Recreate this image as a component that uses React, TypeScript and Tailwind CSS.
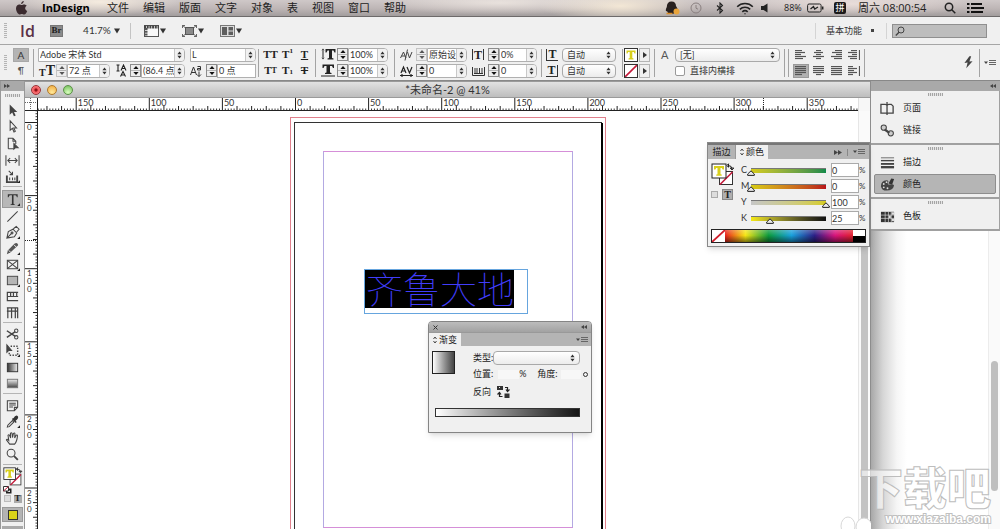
import React from "react";

const step = 73.1;

/* ---------- shared parts ---------- */

function UpDown({ className = "" }: { className?: string }) {
  return (
    <svg viewBox="0 0 5 8" className={"h-2 w-[5px] " + className} fill="#333">
      <path d="M2.5 0.6 4.6 3.2H0.4zM2.5 7.4 4.6 4.8H0.4z" />
    </svg>
  );
}

function Rule() {
  return <span className="h-7 w-px shrink-0 self-center bg-[#a3a3a3]" />;
}

function Grip() {
  return <span className="h-[3px] w-[15px] bg-[repeating-linear-gradient(90deg,#a5a5a5_0_1px,#e4e4e4_1px_2px)]" />;
}

function SideGrip() {
  return <span className="block h-4 w-[3px] shrink-0 bg-[repeating-linear-gradient(180deg,#b5b5b5_0_1px,#eeeeee_1px_2px)]" />;
}

function Stepper({ name, dim = false }: { name: string; dim?: boolean }) {
  return (
    <span className={"flex h-[13px] w-[11px] shrink-0 flex-col border bg-[#ededed] " + (dim ? "border-[#c4c4c4]" : "border-[#8c8c8c]")}>
      <button aria-label={name + " +"} className="flex flex-1 items-center justify-center border-b border-[#b5b5b5]">
        <svg viewBox="0 0 6 3" className="h-[3px] w-[6px]"><path d="M3 0 5.6 3H.4z" fill={dim ? "#555" : "#111"} /></svg>
      </button>
      <button aria-label={name + " -"} className="flex flex-1 items-center justify-center">
        <svg viewBox="0 0 6 3" className="h-[3px] w-[6px]"><path d="M3 3 5.6 0H.4z" fill={dim ? "#555" : "#111"} /></svg>
      </button>
    </span>
  );
}

function Combo({ name, value, className = "" }: { name: string; value: string; className?: string }) {
  return (
    <span className={"flex h-[14px] min-w-0 overflow-hidden rounded-r border border-[#b0b0b0] bg-white " + className}>
      <input aria-label={name} defaultValue={value} className="min-w-0 flex-1 bg-white pl-px text-[9px] leading-3 text-[#333] outline-none" />
      <button aria-label={name + " ▾"} className="flex w-[10px] shrink-0 items-center justify-center border-l border-[#c8c8c8] bg-[#f1f1f1]">
        <UpDown />
      </button>
    </span>
  );
}

function Pop({ name, value, className = "" }: { name: string; value: string; className?: string }) {
  return (
    <span className={"relative flex h-[14px] items-center rounded border border-[#a9a9a9] bg-linear-to-b from-white to-[#ececec] " + className}>
      <select aria-label={name} defaultValue={value} className="h-full w-full appearance-none bg-transparent pl-1 text-[9px] leading-3 text-[#333] outline-none">
        <option>{value}</option>
      </select>
      <UpDown className="pointer-events-none absolute right-1" />
    </span>
  );
}

function FillStroke({ className = "size-6" }: { className?: string }) {
  return (
    <svg viewBox="0 0 24 24" className={"shrink-0 " + className}>
      <rect x="8.5" y="8.5" width="13" height="13" fill="#fff" stroke="#333" />
      <path d="M9 21.5 21.5 9" stroke="#c3193a" strokeWidth="1.6" />
      <rect x="1" y="1" width="14" height="14" fill="#fff" stroke="#222" />
      <path d="M3 3h10v3.600h-1.400L10.800 5H9.500v6.200l1.200.4v1.200h-5.400v-1.200l1.200-.4V5H5.200l-.8 1.600H3z" fill="#d8cf1c" />
      <path d="M17 2.500q4 0 4 3.500M17.500.800v3.400L15.800 2.500zM19.200 5h3.600L21 7z" fill="none" stroke="#222" strokeWidth="1" />
    </svg>
  );
}

/* ---------- menu bar ---------- */

const menus = ["文件", "编辑", "版面", "文字", "对象", "表", "视图", "窗口", "帮助"];

function MenuBar() {
  return (
    <header className="flex h-[17px] shrink-0 items-center border-b border-[#6d6a6a] bg-[radial-gradient(ellipse_80px_14px_at_100px_2px,#fff5e6cc,transparent),radial-gradient(ellipse_120px_12px_at_500px_3px,#fdf6ee99,transparent),radial-gradient(ellipse_80px_16px_at_620px_6px,#fff2dccc,transparent),radial-gradient(ellipse_120px_14px_at_850px_4px,#fff0ea99,transparent),linear-gradient(180deg,#cfc8c8,#bdb5b5_55%,#a29d9d)] text-[11px] leading-4 text-[#222]">
      <svg viewBox="0 0 12 14" className="ml-[15px] h-[14px] w-[13px] shrink-0 fill-[#3b2b2f]">
        <path d="M8.3 0C8.4 1.5 7 3.1 5.6 3.1 5.5 1.7 6.9.2 8.3 0zM6.2 4c.7 0 1.3-.6 2.5-.6 1 0 2 .6 2.5 1.4-2.2 1.3-1.9 4.2.5 5.1-.6 1.7-1.8 3.6-3.1 3.6-.9 0-1.200-.6-2.300-.6s-1.500.6-2.300.6C2.500 13.500.500 10.400.500 7.600c0-2.700 1.700-4.100 3.300-4.100 1.100 0 1.800.5 2.400.5z" />
      </svg>
      <nav className="ml-[14px] flex gap-[14px] whitespace-nowrap">
        <button className="w-[51px] text-left font-['Open_Sans',sans-serif] font-bold text-black">InDesign</button>
        {menus.map((m) => (
          <button key={m}>{m}</button>
        ))}
      </nav>
      <div className="ml-auto flex shrink-0 items-center pr-4">
        <svg viewBox="0 0 16 14" className="h-[14px] w-4">
          <path d="M6.500.500C9.500.500 11 2.500 11 5c2 3 2.200 5 1.500 5.500L11 10c-.5 2-2 3-4.500 3S2.500 12 2 10c-1 1-2-.5-.2-4C1.800 2.500 3.500.500 6.500.500z" fill="#28211f" />
          <circle cx="11.500" cy="10.500" r="3" fill="#e9a43a" />
          <path d="M1.500 12.500h6" stroke="#d98b24" strokeWidth="1.500" />
        </svg>
        <svg viewBox="0 0 12 12" className="ml-[9px] size-3" fill="none" stroke="#8a8080">
          <circle cx="6" cy="6" r="5" /><path d="M6 3v3.200l2 1" />
        </svg>
        <svg viewBox="0 0 8 12" className="ml-[14px] h-3 w-2" fill="none" stroke="#222" strokeWidth="1.100"><path d="M1 3.500 6.500 8.500 4 11V1l2.500 2.500L1 8.500" /></svg>
        <svg viewBox="0 0 18 13" className="ml-[12px] h-[13px] w-[18px]" fill="none" stroke="#222" strokeWidth="1.600">
          <path d="M1.200 4.800a11 11 0 0 1 15.600 0M3.800 7.400a7.400 7.400 0 0 1 10.400 0M6.300 9.900a4 4 0 0 1 5.400 0" /><circle cx="9" cy="11.800" r=".7" fill="#222" stroke="none" />
        </svg>
        <svg viewBox="0 0 7 10" className="ml-[7px] h-[10px] w-[7px]"><path d="M0 3h2.500L6.500.500v9L2.500 7H0z" fill="#222" /></svg>
        <span className="ml-4 w-[20px] font-['Open_Sans',sans-serif] text-[9px]">88%</span>
        <svg viewBox="0 0 17 10" className="ml-[3px] h-[10px] w-[17px]" fill="none" stroke="#222">
          <rect x=".600" y="1" width="13.500" height="8" rx="1.500" /><path d="M15.700 3.500v3" strokeWidth="1.500" /><path d="m3.500 6 3-2.500 1.200 2.500L11 4" strokeWidth="1.300" />
        </svg>
        <span className="ml-[10px] flex size-3 items-center justify-center rounded-xs bg-[#1c1a1a] text-[9px] leading-3 text-white">拼</span>
        <span className="ml-[12px] w-[74px] whitespace-nowrap font-['Open_Sans','Noto_Sans_CJK_SC',sans-serif] text-[11px]">周六 08:00:54</span>
        <svg viewBox="0 0 12 12" className="ml-[12px] size-3" fill="none" stroke="#222" strokeWidth="1.500"><circle cx="5" cy="5" r="3.700" /><path d="m7.800 7.800 3.500 3.500" /></svg>
        <svg viewBox="0 0 17 12" className="ml-[11px] h-3 w-[17px]" stroke="#111" strokeWidth="2"><path d="M0 2h2.500M4 2h11M0 6h2.500M4 6h13M0 10h2.500M4 10h12" /></svg>
      </div>
    </header>
  );
}

/* ---------- application bar ---------- */

function Caret() {
  return <svg viewBox="0 0 6 6" className="size-[6px]"><path d="M0 .500h6L3 5.500z" fill="#333" /></svg>;
}

function AppBar() {
  return (
    <div className="flex h-7 shrink-0 items-center border-b border-[#a6a6a6] bg-[#f0f0f0]">
      <span className="ml-1"><SideGrip /></span>
      <span className="ml-[13px] w-[15px] font-['Open_Sans',sans-serif] text-[16px] leading-5 font-semibold text-[#5b3147]">Id</span>
      <button className="ml-[15px] flex h-3 w-[13px] items-center justify-center border border-[#777] bg-[#8b8b8b] font-['Liberation_Serif',serif] text-[9px] leading-none font-bold text-[#222]">Br</button>
      <button className="ml-5 flex items-center gap-[3px] text-[10px] text-[#333]">
        <span className="w-[28px]">41.7%</span><Caret />
      </button>
      <span className="ml-[10px] h-4 w-px bg-[#c4c4c4]" />
      <button aria-label="视图选项" className="ml-[13px] flex items-center gap-px">
        <svg viewBox="0 0 15 12" className="h-3 w-[15px]"><rect x=".500" y=".500" width="14" height="11" fill="#f8f8f8" stroke="#555" /><path d="M0 2h15" stroke="#444" strokeWidth="3" strokeDasharray="2 .700" /><path d="M2 3v9" stroke="#555" strokeWidth="3" strokeDasharray="2 .700" /></svg>
        <Caret />
      </button>
      <button aria-label="屏幕模式" className="ml-4 flex items-center gap-px">
        <svg viewBox="0 0 15 12" className="h-3 w-[15px]"><rect x="3.500" y="2.500" width="8" height="7" fill="#8a8a8a" stroke="#555" /><path d="M.500 3V.500H3M12 .500h2.500V3M.500 9v2.500H3M12 11.500h2.500V9M0 0l3 2.500M15 0l-3 2.500M0 12l3-2.500M15 12l-3-2.500" fill="none" stroke="#666" /></svg>
        <Caret />
      </button>
      <button aria-label="排列文档" className="ml-4 flex items-center gap-px">
        <svg viewBox="0 0 15 12" className="h-3 w-[15px]"><rect x=".500" y=".500" width="14" height="11" fill="#ddd" stroke="#777" /><path d="M2 2h5v8H2zM8.500 2H13v3.500H8.500zM8.500 6.500H13V10H8.500z" fill="#5e5e5e" /></svg>
        <Caret />
      </button>
      <span className="ml-auto h-4 w-px bg-[#d4d4d4]" />
      <button className="ml-[10px] flex items-center gap-[9px] text-[9px] text-[#333]">基本功能<span className="size-[3px] bg-[#444]" /></button>
      <span className="ml-3 h-4 w-px bg-[#d4d4d4]" />
      <label className="mr-[13px] ml-[5px] flex h-[14px] w-[95px] items-center border border-[#8f8f8f] bg-[#bdbdbd] pl-[2px]">
        <svg viewBox="0 0 10 10" className="size-[10px] shrink-0" fill="none" stroke="#444"><circle cx="6" cy="4" r="3" /><path d="M4 6.200.800 9.500" strokeWidth="1.300" /></svg>
        <input aria-label="搜索" className="min-w-0 flex-1 bg-transparent text-[9px] outline-none" />
      </label>
    </div>
  );
}

/* ---------- control bar ---------- */

const glyph = "flex shrink-0 items-center justify-center font-['Liberation_Serif',serif] font-bold leading-none text-[#222]";

function Bars({ rows, edge = false }: { rows: [number, number][]; edge?: boolean }) {
  return (
    <svg viewBox="0 0 12 10" className="h-[10px] w-3" stroke="#555" strokeWidth="1.200">
      {rows.map(([a, b], i) => <path key={i} d={`M${a} ${0.5 + i * 2}H${b}`} />)}
      {edge && <path d="M11.500 0v10" />}
    </svg>
  );
}

const aligns: { name: string; rows: [number, number][]; edge?: boolean }[] = [
  { name: "左对齐", rows: [[0, 7], [0, 10], [0, 6], [0, 11], [0, 8]] },
  { name: "居中", rows: [[3, 8], [1, 10], [3, 8], [0, 11], [3, 8]] },
  { name: "右对齐", rows: [[4, 11], [1, 11], [5, 11], [0, 11], [3, 11]] },
  { name: "朝向书脊", rows: [[3, 9], [0, 9], [4, 9], [0, 9], [2, 9]], edge: true },
  { name: "双齐末行齐左", rows: [[0, 11], [0, 11], [0, 11], [0, 11], [0, 7]] },
  { name: "双齐末行居中", rows: [[0, 11], [0, 11], [0, 11], [0, 11], [3, 8]] },
  { name: "全部强制双齐", rows: [[0, 11], [0, 11], [0, 11], [0, 11], [0, 11]] },
  { name: "背向书脊", rows: [[0, 5], [0, 9], [0, 6], [0, 9], [0, 5]], edge: true },
];

const caseButtons: { name: string; face: React.ReactNode }[] = [
  { name: "全部大写字母", face: "TT" },
  { name: "上标", face: <>T<sup className="text-[7px] leading-none">1</sup></> },
  { name: "下划线", face: <u>T</u> },
  { name: "小型大写字母", face: <>T<span className="text-[8px]">T</span></> },
  { name: "下标", face: <>T<sub className="text-[7px] leading-none">1</sub></> },
  { name: "删除线", face: <s>T</s> },
];

function ControlBar() {
  return (
    <div className="flex h-[35px] shrink-0 items-center overflow-hidden bg-[#f0f0f0]">
      <span className="ml-1"><SideGrip /></span>
      <div className="ml-[6px] flex w-4 shrink-0 flex-col gap-[2px]">
        <button className="h-[14px] border border-[#a8a8a8] bg-[#b4b4b4] text-[10px] leading-3 text-[#333]">A</button>
        <button className="h-[14px] text-[9px] leading-[14px] text-[#555]">¶</button>
      </div>
      <span className="mr-1 ml-1"><span className="block h-7 w-px bg-[#a3a3a3]" /></span>
      <div className="flex w-[218px] shrink-0 flex-col gap-[2px]">
        <div className="flex gap-[5px]">
          <Combo name="字体" value="Adobe 宋体 Std" className="w-[147px]" />
          <Combo name="字体样式" value="L" className="flex-1" />
        </div>
        <div className="flex items-center">
          <span className={glyph + " w-[18px] items-end text-[14px]"}><span className="text-[10px]">T</span>T</span>
          <Stepper name="字体大小" dim />
          <Combo name="字体大小" value="72 点" className="w-[43px]" />
          <svg viewBox="0 0 12 13" className="mr-[2px] ml-[6px] h-[13px] w-3" fill="none" stroke="#222" strokeWidth="1.100"><path d="M2 1v6M.500 1h3M.500 7h3M5 6.500 7.500 1l2.500 5.500M6 4.500h3M4.500 12.500l2.500-5 2.500 5M5.500 11h3" /></svg>
          <Stepper name="行距" />
          <Combo name="行距" value="(86.4 点" className="w-[44px]" />
          <svg viewBox="0 0 12 12" className="mr-1 ml-[5px] h-3 w-3" fill="none" stroke="#333"><path d="M.500 10 3.500 2l3 8M1.500 7.500h4M7.500 1.500h3V5h-3V3.500h3M9 6.500v5M7 9.500l2 2 2-2" /></svg>
          <Stepper name="基线偏移" />
          <input aria-label="基线偏移" defaultValue="0 点" className="h-[14px] w-[39px] min-w-0 border border-[#b0b0b0] bg-white pl-px text-[9px] leading-3 text-[#333]" />
        </div>
      </div>
      <span className="ml-[2px] flex"><Rule /></span>
      <div className="ml-[3px] grid w-[51px] shrink-0 grid-cols-3 gap-y-[2px]">
        {caseButtons.map((t) => (
          <button key={t.name} aria-label={t.name} className={glyph + " h-[14px] text-[11px]"}>{t.face}</button>
        ))}
      </div>
      <span className="ml-[2px] flex"><Rule /></span>
      <div className="ml-[5px] flex w-[67px] shrink-0 flex-col gap-[2px]">
        <div className="flex items-center">
          <svg viewBox="0 0 16 13" className="h-[13px] w-4 shrink-0" fill="#222"><path d="M.500 2.500 2 .500 3.500 2.500zM1.500 3h1v6h-1zM.500 9.500h3l-1.500 2zM4.500 1h10v3.500h-1L12.500 2.500H11v7.500l1.500.500v1h-6v-1L8 10V2.500H6.500L5.500 4.500h-1z" /></svg>
          <Stepper name="垂直缩放" /><Combo name="垂直缩放" value="100%" className="flex-1" />
        </div>
        <div className="flex items-center">
          <svg viewBox="0 0 16 13" className="h-[13px] w-4 shrink-0" fill="#222"><path d="M1.500.500h11.500V4h-1L11 2H9v6.500l1.500.500v1H4V9l1.500-.500V2H3.500l-1 2h-1zM0 11.500h14v1H0z" /></svg>
          <Stepper name="水平缩放" /><Combo name="水平缩放" value="100%" className="flex-1" />
        </div>
      </div>
      <span className="ml-[6px] flex"><Rule /></span>
      <div className="ml-[5px] flex w-[67px] shrink-0 flex-col gap-[2px]">
        <div className="flex items-center">
          <svg viewBox="0 0 13 12" className="mr-[3px] h-3 w-[13px] shrink-0" fill="none" stroke="#444"><path d="m.500 9 3-6 2.500 6M1.500 7H5M7.500 3l2 6 2.500-6M5 11.500 7.500.500" /></svg>
          <Stepper name="字偶间距" dim /><Combo name="字偶间距" value="原始设" className="flex-1" />
        </div>
        <div className="flex items-center">
          <svg viewBox="0 0 13 12" className="mr-[3px] h-3 w-[13px] shrink-0" fill="none" stroke="#222" strokeWidth="1.200"><path d="m1 8 2.500-6L6 8M2 6h3M7 2l2.500 6L12 2M0 10.500h13M2 9v3M11 9v3" /></svg>
          <Stepper name="字符间距" /><Combo name="字符间距" value="0" className="flex-1" />
        </div>
      </div>
      <div className="ml-[5px] flex w-[65px] shrink-0 flex-col gap-[2px]">
        <div className="flex items-center"><span className={glyph + " mr-1 h-[11px] w-3 border-x border-[#333] text-[12px]"}>T</span><Stepper name="比例间距" /><Combo name="比例间距" value="0%" className="flex-1" /></div>
        <div className="flex items-center">
          <svg viewBox="0 0 13 12" className="mr-[3px] h-3 w-[13px] shrink-0" fill="none" stroke="#333"><path d="M.500 2v8.500h12V2M3 3v5M5 3v5M7.500 3v5M10 3v5M2 8.500h9" /></svg>
          <Stepper name="网格指定格数" /><Combo name="网格指定格数" value="0" className="flex-1" />
        </div>
      </div>
      <span className="ml-[4px] flex"><Rule /></span>
      <div className="ml-[4px] flex shrink-0 flex-col gap-[2px]">
        <div className="flex items-center gap-1"><span className={glyph + " h-3 w-3 border-b border-l border-[#333] text-[12px]"}>T</span><Pop name="字符前挤压间距" value="自动" className="w-[54px]" /></div>
        <div className="flex items-center gap-1"><span className={glyph + " h-3 w-3 border-r border-b border-[#333] text-[12px]"}>T</span><Pop name="字符后挤压间距" value="自动" className="w-[54px]" /></div>
      </div>
      <span className="ml-[6px] flex"><Rule /></span>
      <div className="ml-px flex shrink-0 flex-col gap-[2px]">
        {["填色", "描边"].map((n, i) => (
          <div key={n} className="flex gap-px">
            <button aria-label={n} className="flex h-[14px] w-[14px] items-center justify-center border border-[#333] bg-white">
              {i === 0 ? (
                <svg viewBox="0 0 12 12" className="size-3"><path d="M1.500 1.500h9v3h-1L8.800 3H7.300v6l1.200.500v1h-5v-1L4.700 9V3H3.200l-.700 1.500h-1z" fill="#d8cf1c" /></svg>
              ) : (
                <svg viewBox="0 0 12 12" className="size-3"><path d="M0 12 12 0" stroke="#c3193a" strokeWidth="1.600" /></svg>
              )}
            </button>
            <button aria-label={n + " ▸"} className="flex h-[14px] w-[11px] items-center justify-center border border-[#b5b5b5] bg-[#efefef]"><svg viewBox="0 0 4 6" className="h-[6px] w-1"><path d="M0 0v6l4-3z" fill="#333" /></svg></button>
          </div>
        ))}
      </div>
      <span className="ml-1 flex"><Rule /></span>
      <div className="ml-[6px] flex shrink-0 flex-col gap-[2px]">
        <div className="flex items-center"><span className="w-[14px] text-[11px] leading-3 text-[#555]">A</span><Pop name="字符样式" value="[无]" className="w-[105px]" /></div>
        <label className="ml-[14px] flex h-[14px] items-center gap-[5px] text-[9px] text-[#333]"><input type="checkbox" className="size-[10px] appearance-none rounded-xs border border-[#999] bg-white" />直排内横排</label>
      </div>
      <span className="ml-1 flex gap-[3px]"><Rule /><Rule /></span>
      <div className="ml-1 grid w-[71px] shrink-0 grid-cols-4 gap-y-[2px]">
        {aligns.map((a, i) => (
          <button key={a.name} aria-label={a.name} className={"flex h-[14px] w-4 items-center justify-center " + (i === 4 ? "border border-[#999] bg-[#b0b0b0]" : "")}><Bars rows={a.rows} edge={a.edge} /></button>
        ))}
      </div>
      <span className="flex"><Rule /></span>
      <button aria-label="快速应用" className="ml-auto"><svg viewBox="0 0 10 14" className="h-[13px] w-[9px]"><path d="M6 0 .500 7.500 4 7l-1.500 6.500L9.500 5.500 6 6l2-6z" fill="#444" /></svg></button>
      <span className="ml-[6px] flex"><Rule /></span>
      <button aria-label="面板菜单" className="mr-1 ml-1"><PanelMenu /></button>
    </div>
  );
}

function PanelMenu() {
  return <svg viewBox="0 0 12 8" className="h-2 w-3"><path d="M0 2.500h4L2 5z" fill="#444" /><path d="M5 1.500h7M5 3.500h7M5 5.500h7" stroke="#666" /></svg>;
}

/* ---------- tool strip ---------- */

const s = { fill: "none", stroke: "#444", strokeWidth: 1.1 } as const;
const corner = <path d="M16 15v-3l-3 3z" fill="#222" stroke="none" />;

const tools: { name: string; art: React.ReactNode }[][] = [
  [
    { name: "选择", art: <path d="M5 1.500v11l2.700-2.300 1.800 4 1.900-.9-1.800-3.800h3.500z" fill="#444" /> },
    { name: "直接选择", art: <path d="M5.500 2v10l2.400-2 1.700 3.800 1.400-.7-1.700-3.600h3z" {...s} /> },
    { name: "页面", art: <g {...s}><path d="M3.500 13.500v-11h5l3 3v3M8.500 2.500v3h3M3.500 13.500h6" /><path d="M9.500 8v6l1.700-1.500H14z" fill="#444" /></g> },
    { name: "间隙", art: <g {...s}><path d="M1 2.500v11M15 2.500v11M3 8h10M5.500 5.500 3 8l2.500 2.500M10.500 5.500 13 8l-2.500 2.500" /></g> },
    { name: "内容收集器", art: <g {...s}><path d="M2 7v7h11V7" strokeWidth="2" /><path d="M5 9v3M8 9v3M10.500 9v3M4 2l4 4M8 3v3H5" />{corner}</g> },
  ],
  [
    { name: "文字", art: <g><path d="M3 2.500h10.500v3h-.800Q12.300 3.500 11 3.500H9.100v8.700q0 .900 1.500 1v.600H5.900v-.600q1.500-.100 1.500-1V3.500H5.500Q4.200 3.500 3.800 5.500H3z" fill="#333" />{corner}</g> },
    { name: "直线", art: <path d="M2.500 13.500 13.500 2.500" {...s} /> },
    { name: "钢笔", art: <g {...s}><path d="m2 14 1.500-7 5-2.500 4 4L10 12.500zM2 14l5-5M9 4l3-2.500 3 3-2.500 3" /><circle cx="7.500" cy="8.500" r="1" />{corner}</g> },
    { name: "铅笔", art: <g><path d="m2 14 1-4 7-7q3-2 4 1 0 .500-.500 1L6 12z" fill="#555" /><path d="m4 10 2 2M9.500 4l2.500 2.500" stroke="#eee" />{corner}</g> },
    { name: "矩形框架", art: <g {...s}><rect x="2.500" y="3.500" width="11" height="9" /><path d="m2.500 3.500 11 9M13.500 3.500l-11 9" />{corner}</g> },
    { name: "矩形", art: <g><rect x="2.500" y="3.500" width="11" height="9" fill="#b5b5b5" stroke="#444" />{corner}</g> },
    { name: "水平网格", art: <g {...s}><path d="M2 3.500h12M2 8h12M2 12.500h12M2.500 3v10M6 3v5M9 3v5M12.500 3v5" strokeWidth="1.300" /></g> },
    { name: "垂直网格", art: <g {...s}><path d="M2 3h12M3 3v11M7 3v11M11 3v11M13.500 3v11M2 6.500h12" strokeWidth="1.300" /></g> },
  ],
  [
    { name: "剪刀", art: <g {...s}><path d="M2 4l9 6M2 11l9-6" strokeWidth="1.600" /><circle cx="12" cy="4" r="1.800" /><circle cx="12" cy="11" r="1.800" /></g> },
    { name: "自由变换", art: <g {...s}><path d="M2 2v8l2-2h3z" fill="#444" /><path d="M6 3.500h7.500v9.500H4.500V10" strokeWidth="1.500" strokeDasharray="1.500 1.500" />{corner}</g> },
    { name: "渐变色板", art: <g><rect x="2.500" y="3.500" width="11" height="9" fill="url(#toolgrad)" stroke="#333" /></g> },
    { name: "渐变羽化", art: <g><rect x="2.500" y="3.500" width="11" height="9" fill="url(#toolfade)" stroke="#777" /></g> },
  ],
  [
    { name: "附注", art: <g {...s}><path d="M2.500 3h11v7l-3.500 3.500H2.500zM13.500 10H10v3.500M4.500 5.500h7M4.500 7.500h7M4.500 9.500h4" /></g> },
    { name: "吸管", art: <g><path d="m2.500 14 .5-2 5-5 1.500 1.500-5 5z" {...s} /><path d="m7.500 5.500 4 4 1-1-1.200-1.200q4-3 2.200-5.300Q11.200.500 9 4.500l-.700-.300z" fill="#333" />{corner}</g> },
    { name: "抓手", art: <path d="M5 14 1.500 9.500q.5-1.500 2.500.5L3.200 4.500q.9-1.300 1.700.2L6 7.500 5.800 2.500q1-1.300 1.700 0L8 7l1-4.500q1.200-1 1.600.3L10.300 7.500l1.600-3q1.300-.700 1.400.7-.5 6-3 8.800z" {...s} /> },
    { name: "缩放", art: <g {...s}><circle cx="6.500" cy="6.500" r="4.200" /><path d="m9.700 9.700 4 4" strokeWidth="2" /></g> },
  ],
];

const toolGroupHeights = ["h-[83px]", "h-[131px]", "h-[66px]", "h-[66px]"];

function ToolStrip() {
  return (
    <aside className="flex w-[25px] shrink-0 flex-col overflow-hidden border-x border-[#989898] bg-[#f0f0f0]">
      <div className="flex h-[10px] shrink-0 items-center bg-[#a9a9a9] pl-[3px]"><svg viewBox="0 0 6 4" className="h-1 w-[6px]"><path d="M0 0v4l3-2zM3 0v4l3-2z" fill="#444" /></svg></div>
      <div className="flex h-[11px] shrink-0 items-start justify-center pt-[3px]"><Grip /></div>
      <svg className="absolute size-0" aria-hidden="true">
        <defs>
          <linearGradient id="toolgrad"><stop offset="0" stopColor="#333" /><stop offset="1" stopColor="#eee" /></linearGradient>
          <linearGradient id="toolfade" x2="0" y2="1"><stop offset="0" stopColor="#eee" /><stop offset="1" stopColor="#444" /></linearGradient>
        </defs>
      </svg>
      {tools.map((g, i) => (
        <div key={i} className="flex shrink-0 flex-col">
          <div className={"flex flex-col " + toolGroupHeights[i]}>
            {g.map((t) => (
              <button key={t.name} aria-label={t.name} className={"mx-px flex min-h-0 flex-1 items-center justify-center " + (t.name === "文字" ? "border border-[#999] bg-[#b7b7b7]" : "")}>
                <svg viewBox="0 0 16 16" className="size-[15px] shrink-0">{t.art}</svg>
              </button>
            ))}
          </div>
          <span className="mx-[2px] mt-px mb-[3px] h-px bg-[#b5b5b5]" />
        </div>
      ))}
      <button aria-label="填色和描边" className="flex h-[18px] shrink-0 items-center justify-center"><FillStroke className="size-5" /></button>
      <button aria-label="默认填色和描边" className="ml-[2px] h-2 w-[9px] shrink-0">
        <svg viewBox="0 0 9 8" className="h-2 w-[9px]"><path d="M3 2.500h5.500v5H3z" fill="#222" /><path d="M4.500 4.500H7V6H4.500z" fill="#eee" /><path d="M.500.500h5v4.500h-5z" fill="#fff" stroke="#333" /><path d="M.500 5 5.500.500" stroke="#c3193a" /></svg>
      </button>
      <div className="flex h-[9px] shrink-0 items-center justify-center gap-[3px]">
        <button aria-label="容器" className="size-[7px] border border-[#bbb] bg-[#ddd]" />
        <button aria-label="文本" className={glyph + " size-2 bg-[#aaa] text-[9px]"}>T</button>
      </div>
      <button aria-label="应用颜色" className="mx-px mt-1 flex h-[15px] shrink-0 items-center justify-center border border-[#999] bg-[#b3b3b3]"><span className="size-[10px] border border-[#333] bg-[#d9d31a]" /></button>
      <span className="mx-px mt-1 h-4 shrink-0 bg-[#aaa]" />
    </aside>
  );
}

/* ---------- document window ---------- */

function TopRuler() {
  const ticks = Array.from({ length: 330 }, (_, i) => i - 88);
  return (
    <svg className="h-[13px] min-w-0 flex-1" stroke="#222" fill="none">
      <path d="M0 12.500h821" />
      {ticks.map((n) => {
        const x = 257.5 + (n * step) / 25;
        if (x < 0 || x > 820) return null;
        return <path key={n} d={`M${x} 12V${n % 25 === 0 ? 0 : n % 5 === 0 ? 8 : 10.5}`} strokeWidth={n % 5 === 0 ? 1 : 0.9} />;
      })}
      <path d="M725.500 0v13" strokeDasharray="1 1" />
      {[-3, -2, -1, 0, 1, 2, 3, 4, 5, 6, 7].map((n) => (
        <text key={n} x={259 + n * step} y="8" stroke="none" fill="#333" fontSize="9">{Math.abs(n * 50)}</text>
      ))}
    </svg>
  );
}

function SideRuler() {
  const ticks = Array.from({ length: 400 }, (_, i) => i - 4);
  return (
    <svg className="h-full w-[13px] shrink-0" stroke="#222" fill="none">
      <path d="M12.500 0v2000" />
      {ticks.map((n) => {
        const y = 11.5 + (n * step) / 25;
        return <path key={n} d={`M12 ${y}H${n % 25 === 0 ? 0 : n % 5 === 0 ? 8 : 10.5}`} strokeWidth={n % 5 === 0 ? 1 : 0.9} />;
      })}
      <path d="M0 129.500h13" strokeDasharray="1 1" />
      {[0, 1, 2, 3, 4, 5].map((n) =>
        String(n * 50).split("").map((c, i) => (
          <text key={n + "-" + i} x="2" y={19 + n * step + i * 8} stroke="none" fill="#333" fontSize="8">{c}</text>
        ))
      )}
    </svg>
  );
}

function DocumentWindow() {
  return (
    <main className="flex min-w-0 flex-1 flex-col bg-white">
      <div className="grid h-[17px] shrink-0 grid-cols-[1fr_auto_1fr] items-center border-y border-[#9a9a9a] bg-linear-to-b from-[#e2e2e2] to-[#bdbdbd] text-[11px] leading-4 text-[#333]">
        <div className="flex gap-[6px] pl-[6px]">
          <button aria-label="关闭" className="size-[10px] rounded-full border border-[#9b3034] bg-[radial-gradient(circle,#8c1016_20%,#f0565a_35%,#ff9a9a)]" />
          <button aria-label="最小化" className="size-[10px] rounded-full border border-[#b07a2c] bg-[radial-gradient(circle_at_50%_80%,#ffe99a,#f0a93c)]" />
          <button aria-label="缩放" className="size-[10px] rounded-full border border-[#5c9148] bg-[radial-gradient(circle_at_50%_80%,#d9ffbe,#6ebc56)]" />
        </div>
        <span>*未命名-2 @ 41%</span>
        <span />
      </div>
      <div className="flex h-[13px] shrink-0 bg-white">
        <svg viewBox="0 0 13 13" className="size-[13px] shrink-0" stroke="#666" fill="none"><path d="M5.500 0v13M0 4.500h13" strokeDasharray="1 1" /><path d="M12.500 0v13M0 12.500h13" stroke="#222" /></svg>
        <TopRuler />
        <span className="w-3 shrink-0 border-l border-[#e0e0e0] bg-[#f7f7f7]" />
      </div>
      <div className="flex min-h-0 flex-1">
        <SideRuler />
        <div className="relative min-w-0 flex-1 overflow-hidden bg-white">
          <div className="absolute top-[6px] left-[252px] h-[640px] w-[316px] border border-[#e0808c]" />
          <div className="absolute top-[11px] left-[256px] h-[620px] w-[308px] border border-[#333] bg-white" />
          <div className="absolute top-[12px] left-[563px] h-[620px] w-[2px] bg-black" />
          <div className="absolute top-[40px] left-[285px] h-[377px] w-[250px] border border-x-[#b3a9e2] border-y-[#d58fd8]" />
          <div className="absolute top-[158px] left-[326px] h-[45px] w-[164px] border border-[#66a5de]">
            <p className="h-[38px] w-[149px] bg-black pl-px font-['Noto_Sans_CJK_SC',sans-serif] text-[37px] leading-[36px] font-thin whitespace-nowrap text-[#413dfa]">齐鲁大地</p>
          </div>
        </div>
        <div className="flex w-3 shrink-0 flex-col border-l border-[#e6e6e6] bg-[#fafafa] px-[2px] pb-2">
          <span className="mt-20 flex-1 rounded-full bg-[#c3c3c3]" />
        </div>
      </div>
    </main>
  );
}

/* ---------- floating panels ---------- */

const inks = [
  { n: "C", v: 0, pos: 0, bar: "bg-linear-to-r from-[#d6cc14] to-[#0c8a4a]" },
  { n: "M", v: 0, pos: 0, bar: "bg-linear-to-r from-[#d6cc14] to-[#b80f1a]" },
  { n: "Y", v: 100, pos: 100, bar: "bg-linear-to-r from-[#c6c6c6] to-[#d6cc14]" },
  { n: "K", v: 25, pos: 25, bar: "bg-linear-to-r from-[#f6ea14] to-[#111111]" },
];

function ColorPanel() {
  return (
    <section className="absolute top-[61px] right-[130px] w-[163px] border border-[#888] bg-[#f0f0f0] shadow-md">
      <div className="h-[2px] bg-[#777]" />
      <div className="flex h-[14px] items-stretch bg-[#b4b4b4] text-[9px] leading-[14px] text-[#222]">
        <button className="w-7 border-r border-[#999]">描边</button>
        <button className="flex w-8 items-center justify-center gap-[2px] bg-[#f0f0f0]"><svg viewBox="0 0 4 8" className="h-2 w-1" fill="none" stroke="#444"><path d="M.500 3 2 1l1.500 2M.500 5 2 7l1.500-2" /></svg>颜色</button>
        <span className="ml-auto flex items-center gap-[5px] pr-1">
          <svg viewBox="0 0 8 5" className="h-[5px] w-2"><path d="M0 0v5l4-2.500zM4 0v5l4-2.500z" fill="#444" /></svg>
          <span className="h-[7px] w-px bg-[#888]" />
          <PanelMenu />
        </span>
      </div>
      <div className="flex pt-1 pl-[3px]">
        <div className="flex w-[26px] flex-col gap-[2px]">
          <FillStroke />
          <div className="flex items-center justify-end gap-1 pr-1">
            <button aria-label="容器" className="size-[7px] border border-[#aaa] bg-[#ddd]" />
            <button aria-label="文本" className={glyph + " h-[11px] w-[11px] border border-[#888] bg-[#b0b0b0] text-[10px]"}>T</button>
          </div>
        </div>
        <div className="flex flex-1 flex-col gap-[2px] pl-1">
          {inks.map((k) => (
            <div key={k.n} className="flex h-[14px] items-center text-[9px] leading-3 text-[#333]">
              <label htmlFor={"ink" + k.n} className="w-[10px]">{k.n}</label>
              <span className="relative h-3 flex-1">
                <span className={"absolute inset-x-0 top-1 h-[5px] border-t border-[#777] " + k.bar} />
                <svg viewBox="0 0 8 6" className="absolute top-[6px] -ml-1 h-[6px] w-2" style={{ left: `${k.pos}%` }}><path d="M.700 5.400V4L4 .800 7.300 4v1.400z" fill="#e8e8e8" stroke="#222" /></svg>
                <input id={"ink" + k.n} type="range" defaultValue={k.v} className="absolute inset-0 w-full opacity-0" />
              </span>
              <input aria-label={k.n + " %"} defaultValue={k.v} className="ml-[5px] h-[14px] w-[28px] border border-[#aaa] bg-white text-[9px]" />
              <span className="w-[10px] text-[8px]">%</span>
            </div>
          ))}
        </div>
      </div>
      <div className="mx-[3px] mt-1 mb-[3px] flex h-[14px] border border-[#222]">
        <svg viewBox="0 0 13 12" className="h-3 w-[13px] bg-white"><path d="M0 12 13 0" stroke="#d01c2a" strokeWidth="1.800" /></svg>
        <span className="flex-1 bg-[linear-gradient(180deg,#ffffff40,transparent_45%,#00000080),linear-gradient(90deg,#e8211c,#f5e614_16%,#0c9a3c_34%,#18a0dc_52%,#2c1f86_70%,#d8147c_86%,#e0202c)]" />
        <span className="w-3 bg-[linear-gradient(180deg,#fff_50%,#000_50%)]" />
      </div>
    </section>
  );
}

function GradientPanel() {
  return (
    <section className="absolute top-[240px] left-[428px] w-[164px] overflow-hidden rounded-t-sm border border-[#858585] bg-[#f0f0f0] text-[9px] text-[#222] shadow-md">
      <div className="flex h-[10px] items-center justify-between bg-linear-to-b from-[#bcbcbc] to-[#a2a2a2] px-1">
        <svg viewBox="0 0 5 5" className="size-[5px]" stroke="#333"><path d="m.500.500 4 4M4.500.500l-4 4" /></svg>
        <svg viewBox="0 0 6 4" className="h-1 w-[6px]"><path d="M3 0v4L0 2zM6 0v4L3 2z" fill="#444" /></svg>
      </div>
      <div className="flex h-[14px] items-center border-t border-[#999] bg-[#b4b4b4]">
        <button className="flex h-full w-8 items-center justify-center gap-[2px] bg-[#f0f0f0]"><svg viewBox="0 0 4 8" className="h-2 w-1" fill="none" stroke="#444"><path d="M.500 3 2 1l1.500 2M.500 5 2 7l1.500-2" /></svg>渐变</button>
        <span className="mr-[3px] ml-auto"><PanelMenu /></span>
      </div>
      <div className="flex pt-[5px] pl-[3px]">
        <button aria-label="渐变填色" className="size-[23px] shrink-0 border border-[#222] bg-linear-to-r from-white to-[#444]" />
        <div className="ml-[18px] flex flex-1 flex-col gap-px leading-[14px] whitespace-nowrap">
          <div className="flex items-center"><span className="w-5">类型:</span><Pop name="类型" value="" className="w-[87px]" /></div>
          <div className="flex h-4 items-center">
            <label className="flex items-center">位置:<input className="ml-[5px] h-[9px] w-[21px] bg-[#f7f7f7]" /></label>
            <span className="w-[18px]">%</span>
            <label className="flex items-center">角度:<input className="ml-[3px] h-[9px] w-[20px] bg-[#f7f7f7]" /></label>
            <span className="ml-[2px] size-[5px] rounded-full border border-[#333]" />
          </div>
          <div className="flex h-[18px] items-center gap-[6px]">反向
            <button aria-label="反向"><svg viewBox="0 0 13 12" className="h-3 w-[13px]"><path d="M0 0h6v4H0zM7.500 7.500h5v4.500h-5z" fill="#333" /><path d="M2 1h1v1H2z" fill="#eee" /><path d="M8 1.500h2.500V5M9 3.500 10.500 5.500l2-2M5.500 10.500H2.500V7M.500 8.500 2.500 6.500l1.500 2" fill="none" stroke="#222" strokeWidth="1.200" /></svg></button>
          </div>
        </div>
      </div>
      <div className="mt-[7px] mr-[11px] mb-[15px] ml-[6px] h-[9px] border border-[#333] bg-linear-to-r from-white to-[#151515]" />
    </section>
  );
}

/* ---------- dock ---------- */

const dock: { name: string; art: React.ReactNode }[][] = [
  [
    { name: "页面", art: <g {...s}><path d="M1 3.500h4.500q2 0 2 1.500v8H1zM14 13H7.500V5Q7.500 3.500 9.500 3.500H12l2 2zM7.500 1v14" strokeWidth="1.400" /></g> },
    { name: "链接", art: <g {...s}><circle cx="4" cy="5" r="2.800" fill="#ccc" /><circle cx="11.500" cy="11" r="2.800" fill="#ccc" /><path d="m5 7 5 3.500" strokeWidth="2.500" /></g> },
  ],
  [
    { name: "描边", art: <g stroke="#444"><path d="M1 3h14" strokeWidth=".800" /><path d="M1 6h14" strokeWidth="1.500" /><path d="M1 9.500h14" strokeWidth="2" /><path d="M1 13h14" strokeWidth="2.500" /></g> },
    { name: "颜色", art: <g><path d="M1 10Q1 4 7 3.500q1.500 0 2 1.500-2 3 1 3 4-1 5 1-1 5-8 5.500-5 0-6-4.500z" fill="#444" /><path d="m9 7 3-5.500 3 .5L13 8z" fill="#333" /><g fill="#ddd"><circle cx="4" cy="7.500" r="1" /><circle cx="7" cy="5.500" r="1" /><circle cx="4" cy="11" r="1" /><circle cx="8" cy="12" r="1" /></g></g> },
  ],
  [{ name: "色板", art: <g><path d="M1 3h14v11H1z" fill="#333" /><path d="M5.500 3v11M9 3v11M12 3v11M1 6.500h14M1 10h14" stroke="#ddd" strokeWidth=".700" /><path d="M9.500 7h2v2.500h-2zM12.500 3.500H15V6h-2.500zM12.500 10.500H15V13h-2.500z" fill="#ddd" /></g> }],
];

function Dock() {
  return (
    <aside className="flex w-[130px] shrink-0 flex-col border-l border-[#8d8d8d] bg-white">
      <div className="flex h-[10px] shrink-0 items-center justify-end bg-[#a9a9a9] pr-1"><svg viewBox="0 0 6 4" className="h-1 w-[6px]"><path d="M3 0v4L0 2zM6 0v4L3 2z" fill="#444" /></svg></div>
      {dock.map((g, i) => (
        <div key={i} className="flex flex-col items-center border-r border-b-2 border-[#a0a0a0] bg-[#f0f0f0] px-[3px] pt-[2px] pb-[2px]">
          <Grip />
          <div className="mt-[2px] flex w-full flex-col gap-[2px] pb-px">
            {g.map((d) => (
              <button key={d.name} className={"flex h-5 items-center gap-2 rounded-xs border pl-[5px] text-left text-[9px] leading-4 text-[#222] " + (d.name === "颜色" ? "border-[#8e8e8e] bg-[#b5b5b5]" : "border-transparent")}>
                <svg viewBox="0 0 16 16" className="size-[15px]">{d.art}</svg>{d.name}
              </button>
            ))}
          </div>
        </div>
      ))}
      <div className="relative flex min-h-0 flex-1 justify-end bg-[linear-gradient(90deg,#a8a8a8,#d6d6d6_12px,#f6f6f6_26px,#fff_36px)]">
        <div className="flex w-3 flex-col border-l border-[#ececec] bg-[#fafafa] px-[2px] pt-[130px]"><span className="h-[130px] rounded-full bg-[#bfbfbf]" /></div>
        <div className="pointer-events-none absolute right-[9px] bottom-1 flex flex-col items-end whitespace-nowrap">
          <span className="font-['Noto_Sans_CJK_SC',sans-serif] text-[44px] leading-[54px] font-black text-white/60 [-webkit-text-stroke:1px_#bdbdbd]">下载吧</span>
          <span className="font-['Liberation_Sans',sans-serif] text-[12px] leading-3 font-bold text-white [-webkit-text-stroke:2px_#c0c0c0] [paint-order:stroke_fill]">www.xiazaiba.com</span>
        </div>
        <svg viewBox="0 0 32 14" className="pointer-events-none absolute bottom-0 -left-8 h-[14px] w-8" fill="#fff" stroke="#d8d8d8"><ellipse cx="9" cy="11" rx="7" ry="9" /><ellipse cx="25" cy="12" rx="8" ry="9" /></svg>
      </div>
    </aside>
  );
}

export default function App() {
  return (
    <div className="flex h-screen w-full flex-col overflow-hidden bg-[#f0f0f0] font-[Lato,'Noto_Sans_CJK_SC',sans-serif]">
      <MenuBar />
      <AppBar />
      <ControlBar />
      <div className="relative flex min-h-0 flex-1 border-t border-[#888]">
        <ToolStrip />
        <DocumentWindow />
        <Dock />
        <GradientPanel />
        <ColorPanel />
      </div>
    </div>
  );
}
